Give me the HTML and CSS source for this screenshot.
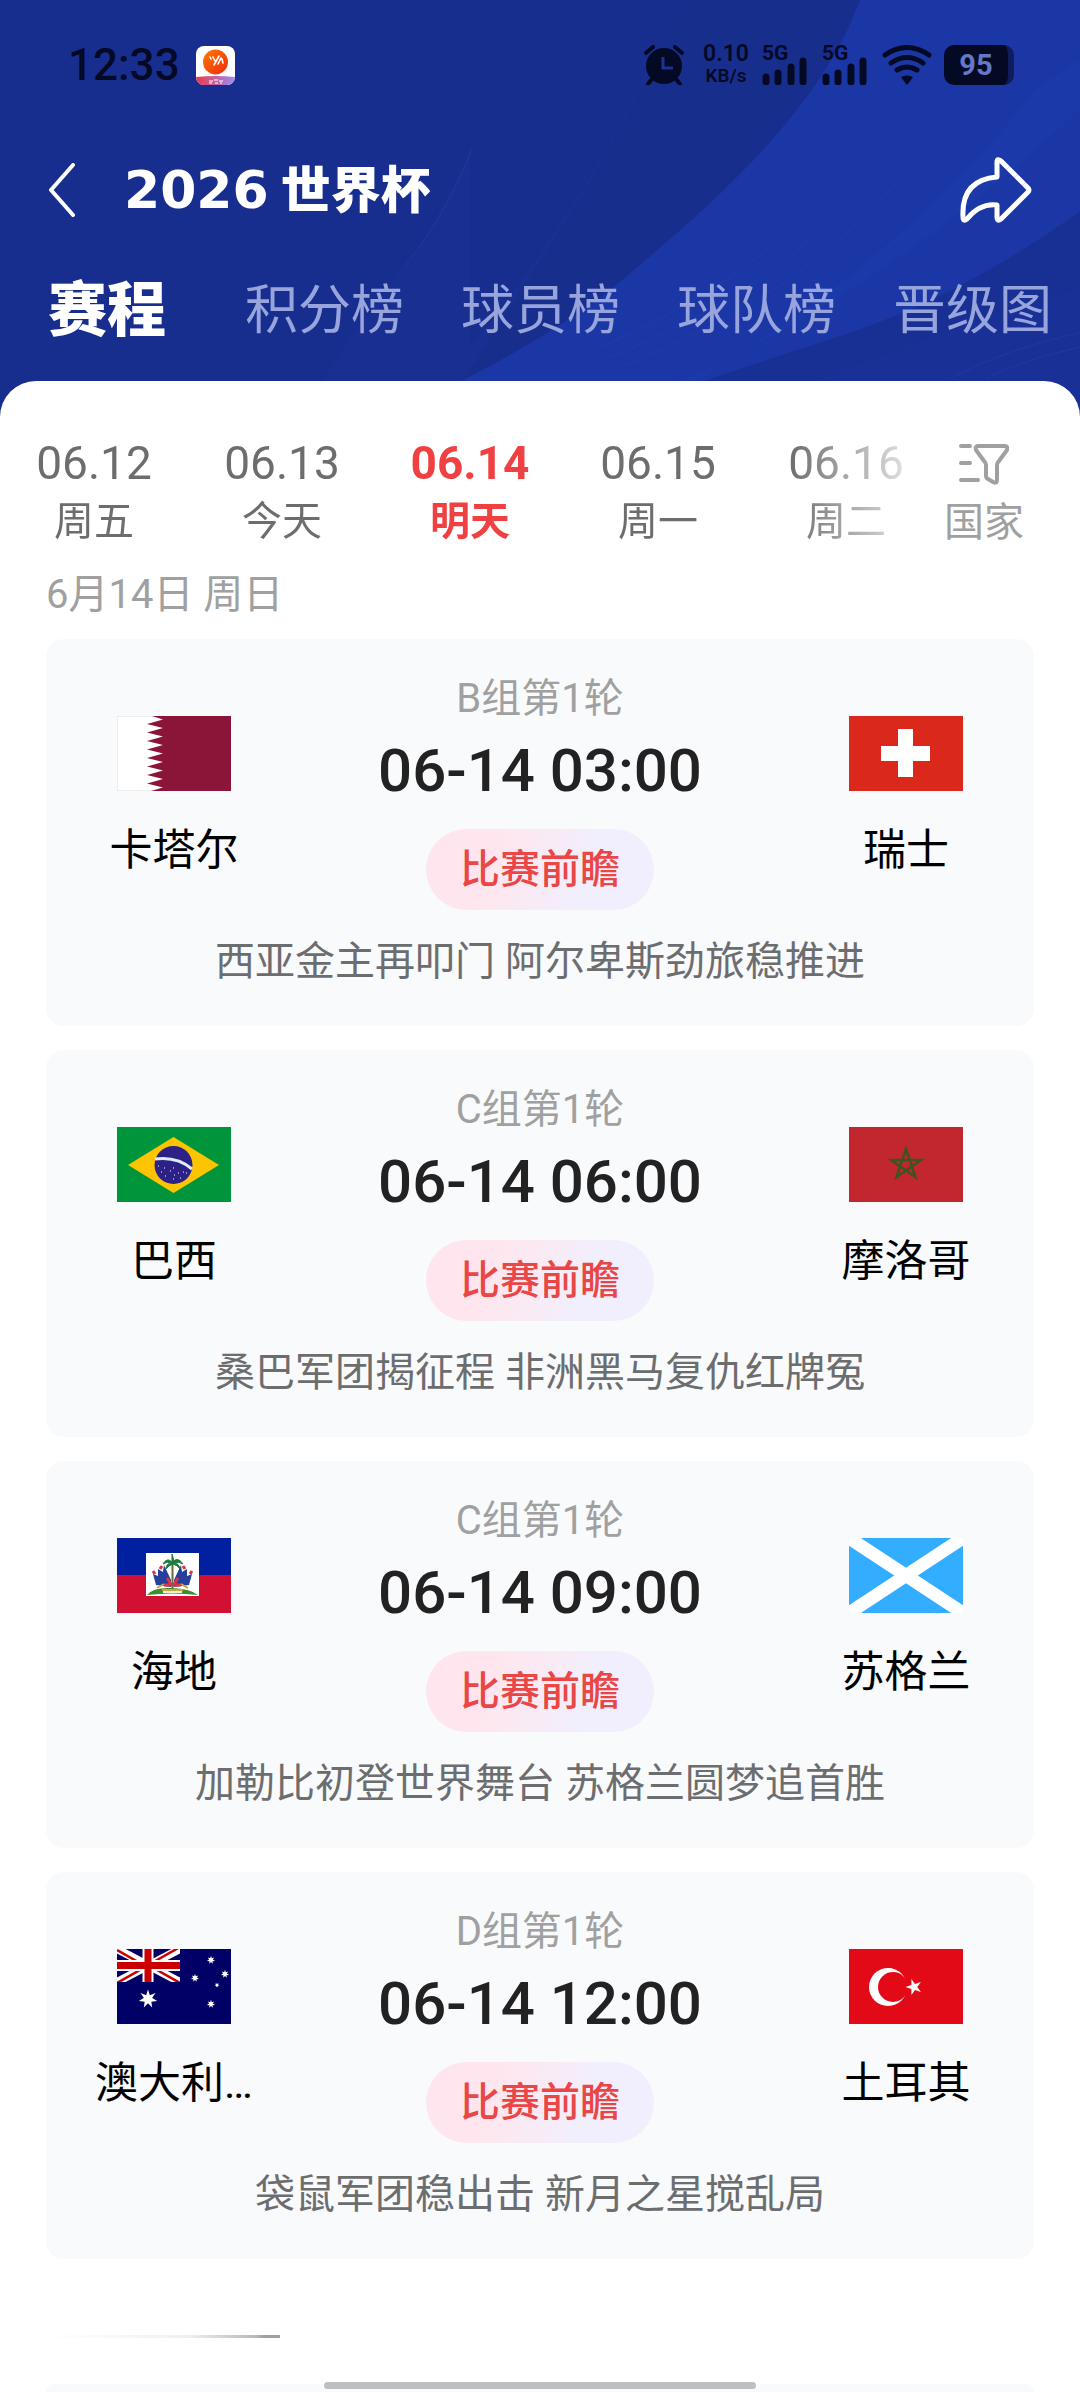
FILE: index.html
```
<!DOCTYPE html>
<html lang="zh-CN">
<head>
    <meta charset="UTF-8">
    <meta name="viewport" content="width=device-width, initial-scale=1.0">
    <title>2026世界杯</title>
    <link rel="stylesheet" href="styles.css">
</head>
<body>

<header class="header">
    <svg class="header-bg" viewBox="0 0 1080 420" preserveAspectRatio="none" aria-hidden="true">
        <path d="M470 150Q440 230 350 340L300 420H560L860 0H678Q600 190 470 350Z" fill="#1a3195" opacity=".5"/>
        <path d="M678 0Q640 110 540 263L440 420H560L860 0Z" fill="#172c88" opacity=".5"/>
        <path d="M860 0C820 110 720 200 609 293Q540 345 430 400V420H1080V0Z" fill="#1b37a5"/>
        <path d="M1035 90Q960 190 840 285T640 395L600 420H660L720 365Q900 280 1080 110V60Z" fill="#1e3bab" opacity=".6"/>
        <path d="M1080 213Q960 300 836 340T660 400V420H1080Z" fill="#182f93"/>
        <path d="M1080 290Q950 330 822 381L760 420H1080Z" fill="#1a3299" opacity=".7"/>
        <g fill="none" stroke="#2341ae" opacity=".5">
            <path d="M840 180Q760 280 600 350"/>
            <path d="M870 180Q780 290 610 360"/>
            <path d="M900 180Q800 300 620 370"/>
            <path d="M1080 335Q1010 350 950 381"/>
            <path d="M1080 350Q1030 360 985 381"/>
            <path d="M472 150Q440 230 396 277"/>
        </g>
    </svg>

    <div class="status">
        <span class="clock">12:33</span>
        <svg class="app-icon" viewBox="0 0 39 39" aria-hidden="true">
            <defs>
                <linearGradient id="ball" x1="0" y1="0" x2="1" y2="1">
                    <stop offset="0" stop-color="#ff7a00"/>
                    <stop offset="1" stop-color="#ee2a10"/>
                </linearGradient>
                <linearGradient id="strip">
                    <stop offset="0" stop-color="#f0384a"/>
                    <stop offset="1" stop-color="#9a8cf5"/>
                </linearGradient>
                <clipPath id="tile"><rect width="39" height="39" rx="8"/></clipPath>
            </defs>
            <g clip-path="url(#tile)">
                <rect width="39" height="39" fill="#fff"/>
                <path d="M0 31Q20 29 39 31V39H0Z" fill="url(#strip)"/>
                <circle cx="19.500" cy="16" r="12.500" fill="url(#ball)"/>
                <path d="M14 11l1 2M17 11l2 4M18 19l5-9M22 18l3-6M26 13l1 4" stroke="#fff" stroke-width="1.600" stroke-linecap="round"/>
                <path d="M13 35h4M18 34h4M23 35h4M13 37h3M19 37h3M24 37h2" stroke="#fff" stroke-width="1.200"/>
            </g>
        </svg>

        <div class="status-right">
            <svg class="alarm" viewBox="0 0 40 40" aria-hidden="true">
                <circle cx="20" cy="21" r="18" fill="currentColor"/>
                <path d="M2 8l7-6M38 8l-7-6M8 34l-4 5M32 34l4 5" stroke="currentColor" stroke-width="4" stroke-linecap="round"/>
                <path d="M19 12v11h10" fill="none" stroke="#1b3392" stroke-width="3"/>
            </svg>
            <div class="speed"><b>0.10</b><span>KB/s</span></div>
            <div class="signal">
                <span>5G</span>
                <svg viewBox="0 0 46 28" aria-hidden="true">
                    <path d="M4 20v5M16 16v9M29 10v15M41 4v21" stroke="currentColor" stroke-width="7" stroke-linecap="round"/>
                </svg>
            </div>
            <div class="signal">
                <span>5G</span>
                <svg viewBox="0 0 46 28" aria-hidden="true">
                    <path d="M4 20v5M16 16v9M29 10v15M41 4v21" stroke="currentColor" stroke-width="7" stroke-linecap="round"/>
                </svg>
            </div>
            <svg class="wifi" viewBox="0 0 50 40" aria-hidden="true">
                <path d="M3 10Q25-5 47 10M9 18Q25 7 41 18M15 25Q25 19 35 25" fill="none" stroke="currentColor" stroke-width="5" stroke-linecap="round"/>
                <path d="M19 32Q25 29 31 32L26 39Q25 40 24 39Z" fill="currentColor"/>
            </svg>
            <div class="battery">95</div>
        </div>
    </div>

    <div class="nav">
        <button class="icon-btn" aria-label="返回">
            <svg class="back" viewBox="0 0 28 54"><path d="M25 2L3 27L25 52" fill="none" stroke="#fff" stroke-width="4" stroke-linecap="round" stroke-linejoin="round"/></svg>
        </button>
        <h1><span class="year">2026</span><span class="cup">世界杯</span></h1>
        <button class="icon-btn share-btn" aria-label="分享">
            <svg class="share" viewBox="0 0 72 66"><path d="M37 5Q37 1 41 4L68 31Q70 33 68 35L41 62Q37 65 37 60V48Q20 46 7 62Q3 65 3 60Q1 23 37 20Z" fill="none" stroke="#fff" stroke-width="5" stroke-linejoin="round"/></svg>
        </button>
    </div>

    <nav class="tabs">
        <a href="#" class="active">赛程</a>
        <a href="#">积分榜</a>
        <a href="#">球员榜</a>
        <a href="#">球队榜</a>
        <a href="#">晋级图</a>
    </nav>
</header>

<main class="sheet">
    <div class="dates">
        <div class="days">
            <button class="day">06.12<span>周五</span></button>
            <button class="day">06.13<span>今天</span></button>
            <button class="day active">06.14<span>明天</span></button>
            <button class="day">06.15<span>周一</span></button>
            <button class="day">06.16<span>周二</span></button>
        </div>
        <button class="filter">
            <svg viewBox="0 0 50 42" aria-hidden="true">
                <g fill="none" stroke="currentColor" stroke-width="4" stroke-linecap="round" stroke-linejoin="round">
                    <path d="M2 3h9M2 20h9M2 37h17"/>
                    <path d="M19 3H46Q49 3 48 7L40 18Q38 20 38 22V37Q38 41 34 39L29 36Q27 35 27 33V22Q27 20 25 18L17 7Q16 3 19 3Z"/>
                </g>
            </svg>
            <span>国家</span>
        </button>
    </div>

    <h2 class="day-title">6月14日 周日</h2>

    <section class="matches">
        <article class="match">
            <div class="row">
                <div class="team">
                    <svg class="flag" viewBox="0 0 114 75" role="img" aria-label="卡塔尔">
                        <path d="M0 0H114V75H0Z" fill="#fff" stroke="#ddd"/>
                        <path d="M114 0H35L46 3.500 30 8 46 12 30 16.500 46 20.500 30 25 46 29 30 33.500 46 37.500 30 42 46 46 30 50.500 46 54.500 30 59 46 63 30 67.500 46 71.500 34 75H114Z" fill="#8a1538"/>
                    </svg>
                    <div class="name">卡塔尔</div>
                </div>
                <div class="info">
                    <div class="group">B组第1轮</div>
                    <div class="time">06-14 03:00</div>
                    <button class="preview">比赛前瞻</button>
                </div>
                <div class="team">
                    <svg class="flag" viewBox="0 0 114 75" role="img" aria-label="瑞士">
                        <path d="M0 0H114V75H0Z" fill="#da291c"/>
                        <path d="M49 13H64V30H81V45H64V61H49V45H32V30H49Z" fill="#fff"/>
                    </svg>
                    <div class="name">瑞士</div>
                </div>
            </div>
            <p class="desc">西亚金主再叩门 阿尔卑斯劲旅稳推进</p>
        </article>

        <article class="match">
            <div class="row">
                <div class="team">
                    <svg class="flag" viewBox="0 0 114 75" role="img" aria-label="巴西">
                        <path d="M0 0H114V75H0Z" fill="#00953b"/>
                        <path d="M11 38L56.500 10 102 38 56.500 66Z" fill="#ffc400"/>
                        <circle cx="56.500" cy="38" r="19" fill="#2c2187"/>
                        <path d="M38 32Q60 29 75 42" fill="none" stroke="#dcebf5" stroke-width="3"/>
                        <path d="M41 39h1M44 45h1M47 41h1M48 49h1M53 44h1M56 41h1M57 48h1M61 46h1M63 51h1M66 45h1M56 52h1M69 46h1" stroke="#fff" stroke-width="1.200"/>
                    </svg>
                    <div class="name">巴西</div>
                </div>
                <div class="info">
                    <div class="group">C组第1轮</div>
                    <div class="time">06-14 06:00</div>
                    <button class="preview">比赛前瞻</button>
                </div>
                <div class="team">
                    <svg class="flag" viewBox="0 0 114 75" role="img" aria-label="摩洛哥">
                        <path d="M0 0H114V75H0Z" fill="#c1272d"/>
                        <path d="M57 22L66.500 50 42 33H72L47.500 50Z" fill="none" stroke="#3f5320" stroke-width="2.500"/>
                    </svg>
                    <div class="name">摩洛哥</div>
                </div>
            </div>
            <p class="desc">桑巴军团揭征程 非洲黑马复仇红牌冤</p>
        </article>

        <article class="match">
            <div class="row">
                <div class="team">
                    <svg class="flag" viewBox="0 0 114 75" role="img" aria-label="海地">
                        <path d="M0 0H114V37H0Z" fill="#00209f"/>
                        <path d="M0 37H114V75H0Z" fill="#d21034"/>
                        <path d="M29 15H82V58H29Z" fill="#fff"/>
                        <path d="M30 57Q36 49 55 50T81 57Q55 54 30 57Z" fill="#3e8e2f"/>
                        <path d="M39 47L36 36 41 38 41 31 46 34 47 27 54 42V49ZM72 47L75 36 70 38 70 31 65 34 64 27 57 42V49Z" fill="#24409a"/>
                        <path d="M43 31l2-3M38 36l-2-3M68 31l-2-3M73 36l2-3M50 40l5 8M61 40l-5 8M47 47h17" stroke="#d8334a" stroke-width="3"/>
                        <path d="M40 50l7-4M71 50l-7-4M45 52h21" stroke="#d0a43a" stroke-width="2"/>
                        <path d="M55.500 24V50" stroke="#6b6a35" stroke-width="2"/>
                        <path d="M55 24Q50 19 46 26Q50 23 55 25Q49 25 49 31Q52 27 56 26Q60 27 63 31Q62 25 57 25Q62 23 66 26Q61 19 57 23L55 16Z" fill="#1c7a3a" stroke="#1c7a3a"/>
                        <path d="M46 54h19" stroke="#eef3dc" stroke-width="2"/>
                    </svg>
                    <div class="name">海地</div>
                </div>
                <div class="info">
                    <div class="group">C组第1轮</div>
                    <div class="time">06-14 09:00</div>
                    <button class="preview">比赛前瞻</button>
                </div>
                <div class="team">
                    <svg class="flag" viewBox="0 0 114 75" role="img" aria-label="苏格兰">
                        <path d="M0 0H114V75H0Z" fill="#33adff"/>
                        <path d="M0 0L114 75M114 0L0 75" stroke="#fff" stroke-width="13"/>
                    </svg>
                    <div class="name">苏格兰</div>
                </div>
            </div>
            <p class="desc">加勒比初登世界舞台 苏格兰圆梦追首胜</p>
        </article>

        <article class="match">
            <div class="row">
                <div class="team">
                    <svg class="flag" viewBox="0 0 114 75" role="img" aria-label="澳大利亚">
                        <defs>
                            <clipPath id="canton"><path d="M0 0H63V33H0Z"/></clipPath>
                            <path id="star7" d="M0-10L1.950-4.050 7.820-6.230 4.390-1 9.750 2.230 3.520 2.810 4.340 9.010 0 4.500-4.340 9.010-3.520 2.810-9.750 2.230-4.390-1-7.820-6.230-1.950-4.050Z"/>
                        </defs>
                        <path d="M0 0H114V75H0Z" fill="#006"/>
                        <g clip-path="url(#canton)">
                            <path d="M0 0L63 33M63 0L0 33" stroke="#fff" stroke-width="8"/>
                            <path d="M0 1L30 18M63 34L33 17M33 15L63-2M30 17L0 34" stroke="#c00" stroke-width="2.500"/>
                            <path d="M31 0V33M0 16.500H63" stroke="#fff" stroke-width="11"/>
                            <path d="M31 0V33M0 16.500H63" stroke="#c00" stroke-width="7"/>
                        </g>
                        <g fill="#fff">
                            <use href="#star7" transform="translate(31 50) scale(.95)"/>
                            <use href="#star7" transform="translate(94 11) scale(.42)"/>
                            <use href="#star7" transform="translate(78 29) scale(.42)"/>
                            <use href="#star7" transform="translate(108 25) scale(.42)"/>
                            <use href="#star7" transform="translate(94 55) scale(.42)"/>
                            <use href="#star7" transform="translate(100 36) scale(.25)"/>
                        </g>
                    </svg>
                    <div class="name">澳大利…</div>
                </div>
                <div class="info">
                    <div class="group">D组第1轮</div>
                    <div class="time">06-14 12:00</div>
                    <button class="preview">比赛前瞻</button>
                </div>
                <div class="team">
                    <svg class="flag" viewBox="0 0 114 75" role="img" aria-label="土耳其">
                        <path d="M0 0H114V75H0Z" fill="#e30a17"/>
                        <circle cx="39" cy="38" r="19" fill="#fff"/>
                        <circle cx="44" cy="38" r="15" fill="#e30a17"/>
                        <path transform="translate(65 38) rotate(-90) scale(.85)" d="M0-10L2.250-3.090H9.510L3.630 1.180 5.880 8.090 0 3.820-5.880 8.090-3.630 1.180-9.510-3.090H-2.250Z" fill="#fff"/>
                    </svg>
                    <div class="name">土耳其</div>
                </div>
            </div>
            <p class="desc">袋鼠军团稳出击 新月之星搅乱局</p>
        </article>
    </section>

    <div class="next-line"></div>
    <div class="next-card"></div>
</main>

<div class="home-bar"></div>
</body>
</html>
```
FILE: styles.css
```
* {
    margin: 0;
    padding: 0;
    box-sizing: border-box;
}

body {
    background: #fff;
    font-family: Roboto, "Noto Sans CJK SC", sans-serif;
    font-size: 40px;
    line-height: 48px;
    overflow-x: hidden;
}

button {
    font: inherit;
    color: inherit;
    background: none;
    border: none;
}

svg {
    display: block;
}

/* header */
.header {
    position: relative;
    padding: 40px 0 36px;
    background: #182e8e;
    color: #fff;
    overflow: hidden;
}

.header-bg {
    position: absolute;
    top: 0;
    left: 0;
    width: 100%;
    height: 100%;
}

.status, .nav, .tabs {
    position: relative;
    display: flex;
    align-items: center;
}

.status {
    height: 50px;
    padding: 0 66px 0 68px;
    color: #040a24;
}

.clock {
    font-size: 44px;
    font-weight: 500;
}

.app-icon {
    width: 39px;
    height: 39px;
    margin-left: 16px;
}

.status-right {
    display: flex;
    align-items: center;
    gap: 12px;
    margin-left: auto;
}

.alarm {
    width: 40px;
    height: 40px;
    margin-right: 6px;
}

.speed {
    display: flex;
    flex-direction: column;
    width: 48px;
    font-size: 19px;
    font-weight: 600;
    line-height: 22px;
    text-align: center;
}

.speed b {
    font-size: 23px;
    font-weight: 600;
}

.signal {
    position: relative;
    width: 48px;
    height: 40px;
    padding-top: 12px;
}

.signal span {
    position: absolute;
    top: -2px;
    left: 0;
    font-size: 21px;
    font-weight: 700;
    line-height: 20px;
}

.signal svg {
    width: 46px;
    height: 28px;
}

.wifi {
    width: 50px;
    height: 40px;
}

.battery {
    width: 70px;
    height: 40px;
    border-radius: 10px;
    border-right: 6px solid #101c5c;
    background: #040a24;
    color: #6478c8;
    font-size: 29px;
    font-weight: 700;
    line-height: 40px;
    text-align: center;
}

.nav {
    height: 100px;
    margin-top: 50px;
    padding: 0 48px;
}

.back {
    width: 28px;
    height: 54px;
}

.share {
    width: 72px;
    height: 66px;
}

.share-btn {
    margin-left: auto;
}

h1 {
    display: flex;
    align-items: center;
    gap: 12px;
    margin-left: 48px;
    font-size: 50px;
    line-height: 60px;
}

.year {
    font-family: "DejaVu Sans", sans-serif;
    font-size: 52px;
    font-weight: 700;
}

.cup {
    padding-bottom: 8px;
    font-family: "Noto Sans CJK SC", sans-serif;
    font-weight: 900;
}

.tabs {
    gap: 57px;
    height: 141px;
    padding: 0 48px;
    font-size: 53px;
    line-height: 72px;
    white-space: nowrap;
}

.tabs a {
    color: #98a4dc;
    text-decoration: none;
}

.tabs .active {
    margin-right: 22px;
    color: #fff;
    font-size: 59px;
    font-weight: 900;
}

/* white panel */
.sheet {
    position: relative;
    margin-top: -36px;
    padding: 54px 46px 0;
    border-radius: 36px 36px 0 0;
    background: #fff;
}

.dates {
    display: flex;
    margin: 0 -46px;
    color: #6c6d6f;
}

.days {
    display: flex;
    width: 85%;
    overflow: hidden;
    -webkit-mask-image: linear-gradient(to right, #000 86%, transparent 102%);
    mask-image: linear-gradient(to right, #000 86%, transparent 102%);
}

.day {
    flex: 0 0 188px;
    font-size: 46px;
    line-height: 56px;
}

.day span {
    display: block;
    padding-top: 3px;
    font-size: 40px;
}

.day.active {
    color: #f04142;
    font-weight: 700;
}

.filter {
    display: flex;
    flex-direction: column;
    align-items: center;
    gap: 14px;
    width: 132px;
    padding-top: 8px;
    color: #a0a0a0;
}

.filter svg {
    width: 50px;
    height: 42px;
}

.day-title {
    margin: 21px 0 20px;
    color: #a0a0a0;
    font-size: 40px;
    font-weight: 400;
}

.matches {
    display: flex;
    flex-direction: column;
    gap: 24px;
}

.match {
    padding: 36px 46px 40px;
    border-radius: 18px;
    background: #f9fafc;
    text-align: center;
}

.row {
    display: grid;
    grid-template-columns: 164px 1fr 164px;
}

.team {
    padding-top: 41px;
}

.flag {
    width: 114px;
    height: 75px;
    margin: 0 auto 31px;
}

.name {
    overflow: hidden;
    color: #000;
    font-size: 43px;
    line-height: 56px;
    text-overflow: ellipsis;
    white-space: nowrap;
}

.group {
    color: #a0a0a0;
}

.time {
    margin: 16px 0 26px;
    color: #222;
    font-size: 60px;
    font-weight: 500;
    line-height: 64px;
}

.preview {
    height: 81px;
    padding: 0 34px;
    border-radius: 41px;
    background: linear-gradient(110deg, #ffe6ee 30%, #f1effd 70%);
    color: #ea4646;
    font-weight: 500;
    vertical-align: top;
}

.desc {
    margin-top: 28px;
    color: #6c6d6f;
}

.next-line {
    width: 234px;
    height: 3px;
    margin: 76px 0 46px;
    background: linear-gradient(to right, #fff, #f0f0f0 60%, #b8b8b8 90%, #a0a0a0 93%);
}

.next-card {
    height: 8px;
    border-radius: 18px 18px 0 0;
    background: #f9fafc;
}

.home-bar {
    position: fixed;
    bottom: 3px;
    left: 30%;
    width: 40%;
    height: 7px;
    border-radius: 4px;
    background: #bebfc0;
}
```
